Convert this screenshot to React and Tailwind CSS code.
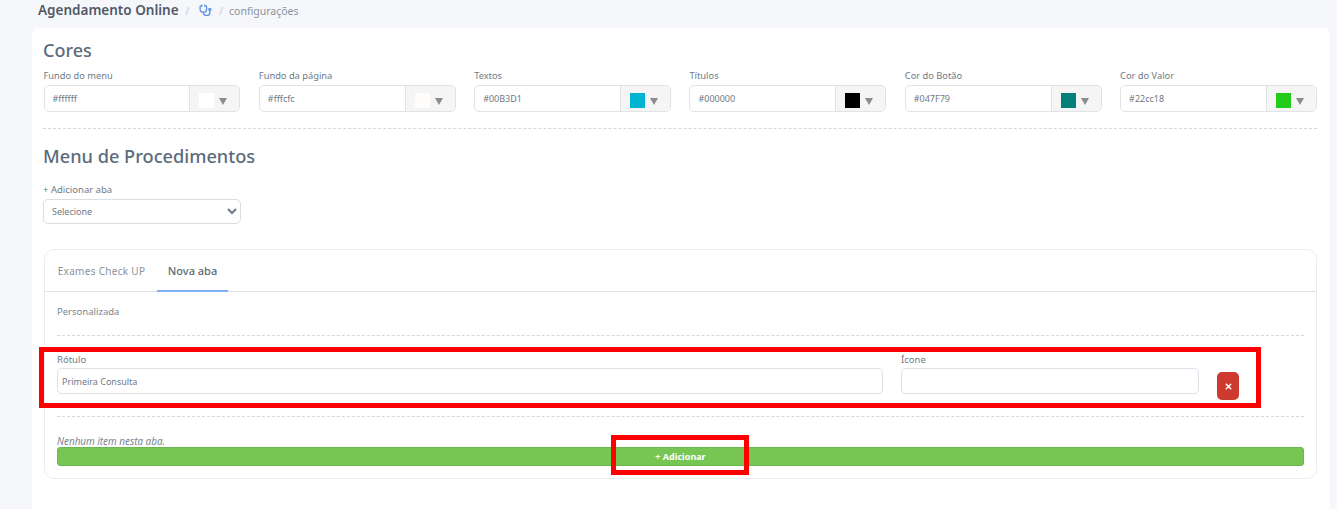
import { Stethoscope, X } from "lucide-react";

const colors = [
  { label: "Fundo do menu", value: "#ffffff", swatch: "bg-[#ffffff]" },
  { label: "Fundo da página", value: "#fffcfc", swatch: "bg-[#fffcfc]" },
  { label: "Textos", value: "#00B3D1", swatch: "bg-[#00b3d1]" },
  { label: "Títulos", value: "#000000", swatch: "bg-[#000000]" },
  { label: "Cor do Botão", value: "#047F79", swatch: "bg-[#047f79]" },
  { label: "Cor do Valor", value: "#22cc18", swatch: "bg-[#22cc18]" },
];

function ColorField({ label, value, swatch }) {
  return (
    <div>
      <label className="block h-[14px] text-[9.3px] leading-[14px] text-[#6f7a86]">{label}</label>
      <div className="mt-[2px] flex h-[27px] rounded-[5px] border border-[#dfe3e8]">
        <input
          readOnly
          value={value}
          className="min-w-0 flex-1 rounded-l-[5px] bg-white pl-2 text-[9px] text-[#6f7a86] outline-none"
        />
        <div className="flex w-[50px] shrink-0 items-center rounded-r-[5px] border-l border-[#dfe3e8] bg-[#f5f5f5] pl-[9px] pt-[3px]">
          <span className={`h-[15px] w-[15px] ${swatch}`} />
          <svg width="8" height="7" viewBox="0 0 8 7" className="ml-[5px] mt-[2px]">
            <polygon points="0,0 8,0 4,7" fill="#8c8c8c" />
          </svg>
        </div>
      </div>
    </div>
  );
}

export default function App() {
  return (
    <div className="relative h-[509px] overflow-hidden bg-[#f6f7fb] font-['Noto_Sans',sans-serif]">
      {/* Breadcrumb */}
      <div className="flex h-[28px] items-start pl-[38px] pt-[1px]">
        <span className="text-[13.5px] font-semibold leading-[18px] text-[#4f5a66]">Agendamento Online</span>
        <span className="ml-[7px] text-[10px] leading-[20px] text-[#c4cad1]">/</span>
        <Stethoscope size={13} strokeWidth={2.5} className="ml-[10px] mt-[3px] text-[#5d93e6]" />
        <span className="ml-[7px] text-[10px] leading-[20px] text-[#c4cad1]">/</span>
        <span className="ml-[6px] text-[10.5px] leading-[21px] text-[#8a939d]">configurações</span>
      </div>

      <div className="ml-[32px] mr-[7px] h-[490px] rounded-[6px] bg-white pl-[11px] pr-[13px] pt-[10px]">
        <h2 className="text-[18px] font-medium leading-[24px] text-[#5b6b7c]">Cores</h2>
        <div className="ml-[0.5px] mt-[7px] grid grid-cols-6 gap-[18.4px]">
          {colors.map((c) => (
            <ColorField key={c.label} {...c} />
          ))}
        </div>

        <div className="mt-[16px] border-t border-dashed border-[#d4d8dd]" />

        <h2 className="mt-[15px] text-[18.2px] font-medium leading-[24px] text-[#5b6b7c]">Menu de Procedimentos</h2>

        <label className="mt-[15px] block text-[9.5px] leading-[14px] text-[#6f7a86]">+ Adicionar aba</label>
        <select className="mt-[2px] block h-[25px] w-[198px] rounded-[5px] border border-[#d9dee3] bg-white pl-1 text-[9px] text-[#6f7a86]">
          <option>Selecione</option>
        </select>

        {/* Tabs */}
        <div className="ml-px mt-[25px] h-[230px] rounded-[10px] border border-[#e9ecef]">
          <div className="flex h-[42px] border-b border-[#dfe3e8]">
            <span className="flex w-[112px] items-center justify-center pl-[1px] pt-[2px] text-[10px] tracking-[0.3px] text-[#8a939d]">
              Exames Check UP
            </span>
            <span className="flex h-[42px] w-[71px] items-center justify-center border-b-2 border-[#7fb0ef] pt-[2px] text-[11px] font-medium text-[#5f6b76]">
              Nova aba
            </span>
          </div>

          <div className="px-[12px]">
            <p className="mt-[13px] text-[9.5px] leading-[14px] text-[#7b858f]">Personalizada</p>
            <div className="mt-[16px] border-t border-dashed border-[#d4d8dd]" />

            <div className="mt-[18px] flex gap-[18px]">
              <div className="w-[826px] shrink-0">
                <label className="block h-[11px] text-[9.5px] leading-[11px] text-[#6f7a86]">Rótulo</label>
                <input
                  readOnly
                  value="Primeira Consulta"
                  className="mt-[3px] block h-[26px] w-full rounded-[5px] border border-[#dbe0e8] bg-white pl-1 text-[9px] text-[#6f7a86] outline-none"
                />
              </div>
              <div className="w-[298px] shrink-0">
                <label className="block h-[11px] text-[9.5px] leading-[11px] text-[#6f7a86]">Ícone</label>
                <input
                  readOnly
                  className="mt-[3px] block h-[26px] w-full rounded-[5px] border border-[#dbe0e8] bg-white outline-none"
                />
              </div>
              <button className="mt-[18px] flex h-[28px] w-[22px] shrink-0 items-center justify-center rounded-[5px] bg-[#cf3a2e] text-white">
                <X size={9} strokeWidth={4} />
              </button>
            </div>

            <div className="mt-[16px] border-t border-dashed border-[#d4d8dd]" />

            <p className="mt-[17px] h-[13px] text-[9.9px] italic leading-[14px] text-[#7b858f]">Nenhum item nesta aba.</p>
            <button className="block h-[19px] w-full rounded-[3px] border border-[#6db652] bg-[#77c653] text-[9px] font-bold text-white">
              + Adicionar
            </button>
          </div>
        </div>
      </div>

      {/* Red annotations drawn over the screenshot */}
      <div className="absolute left-[39px] top-[347px] h-[61px] w-[1222px] border-[5px] border-[#fe0000]" />
      <div className="absolute left-[611px] top-[435px] h-[40px] w-[138px] border-[5px] border-[#fe0000]" />
    </div>
  );
}
